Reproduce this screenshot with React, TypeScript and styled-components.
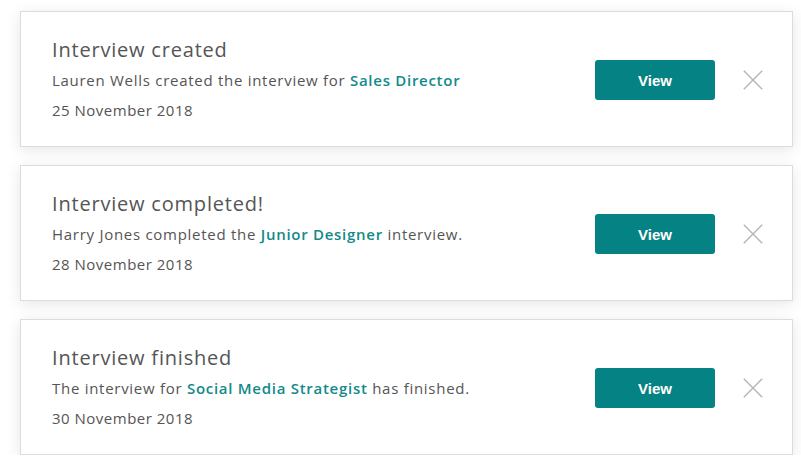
import React from "react";
import styled, { createGlobalStyle } from "styled-components";

const Global = createGlobalStyle`
  html, body { margin: 0; padding: 0; background: #ffffff; }
  body { font-family: "Open Sans", "Liberation Sans", sans-serif; }
`;

const List = styled.div`
  display: flex;
  flex-direction: column;
  gap: 18px;
  padding: 11px 8px 0 20px;
`;

const Card = styled.div`
  box-sizing: border-box;
  width: 773px;
  height: 136px;
  background: #fff;
  border: 1px solid #dcdcdc;
  box-shadow: 0 3px 14px rgba(0, 0, 0, 0.1);
  display: flex;
  align-items: center;
  padding: 2px 29px 0 31px;
`;

const Body = styled.div`
  flex: 1;
  display: flex;
  flex-direction: column;
  color: #555;
`;

const Title = styled.div`
  font-size: 20px;
  line-height: 30px;
  font-weight: 500;
  color: #555;
  letter-spacing: 0.8px;
`;

const Message = styled.div`
  font-size: 15px;
  line-height: 30px;
  font-weight: 500;
  color: #555;
  letter-spacing: 0.72px;
`;

const Link = styled.a`
  color: #138a8a;
  font-weight: 600;
  text-decoration: none;
`;

const DateLine = styled.div`
  font-size: 15px;
  line-height: 30px;
  font-weight: 500;
  color: #555;
  letter-spacing: 0.5px;
`;

const ViewButton = styled.button`
  width: 120px;
  height: 40px;
  border: none;
  border-radius: 3px;
  background: #058283;
  color: #fff;
  font-family: "Liberation Sans", Arial, sans-serif;
  font-weight: 700;
  font-size: 15px;
  cursor: pointer;
`;

const Close = styled.button`
  margin-left: 28px;
  width: 20px;
  height: 20px;
  padding: 0;
  border: none;
  background: transparent;
  display: flex;
  align-items: center;
  justify-content: center;
  cursor: pointer;
`;

const CloseIcon = () => (
  <svg width="20" height="20" viewBox="0 0 20 20">
    <path d="M0.8 0.8 L19.2 19.2 M19.2 0.8 L0.8 19.2" stroke="#b5b5b5" strokeWidth="1.4" fill="none" />
  </svg>
);

type Item = { title: string; before: string; link: string; after: string; date: string };

const items: Item[] = [
  { title: "Interview created", before: "Lauren Wells created the interview for ", link: "Sales Director", after: "", date: "25 November 2018" },
  { title: "Interview completed!", before: "Harry Jones completed the ", link: "Junior Designer", after: " interview.", date: "28 November 2018" },
  { title: "Interview finished", before: "The interview for ", link: "Social Media Strategist", after: " has finished.", date: "30 November 2018" },
];

export default function App() {
  return (
    <>
      <Global />
      <List>
        {items.map((it) => (
          <Card key={it.title}>
            <Body>
              <Title>{it.title}</Title>
              <Message>
                {it.before}
                <Link href="#">{it.link}</Link>
                {it.after}
              </Message>
              <DateLine>{it.date}</DateLine>
            </Body>
            <ViewButton>View</ViewButton>
            <Close aria-label="Close">
              <CloseIcon />
            </Close>
          </Card>
        ))}
      </List>
    </>
  );
}
